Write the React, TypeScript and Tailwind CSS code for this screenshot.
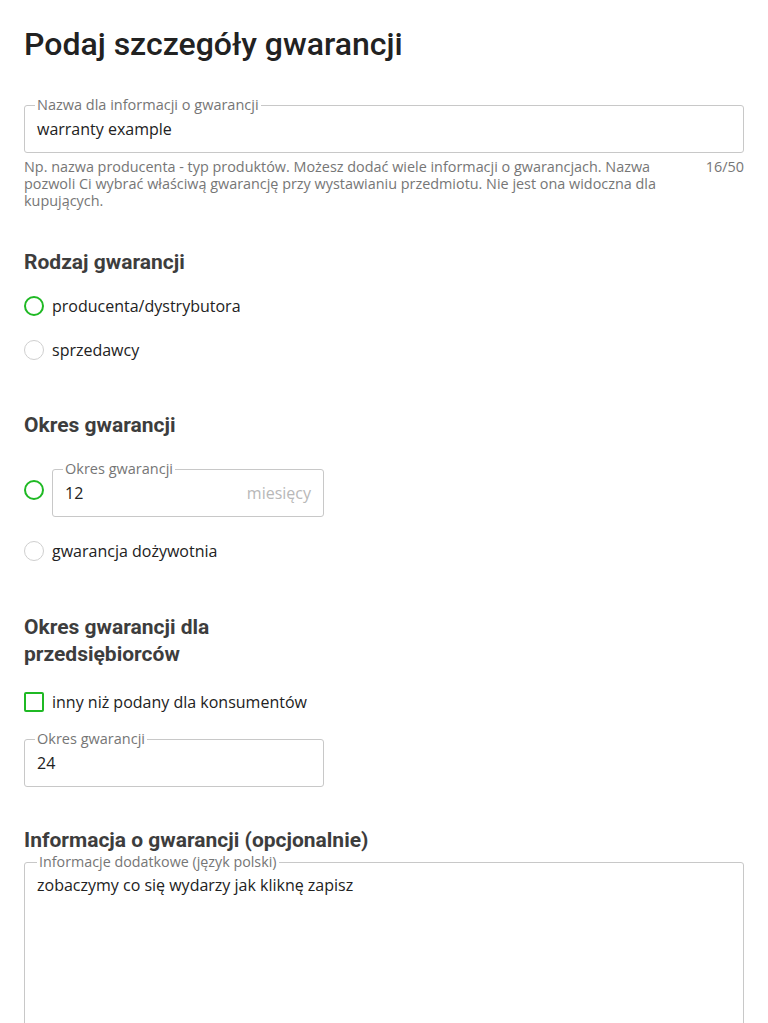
import React from "react";

const body = "font-['Open_Sans',sans-serif]";

function Field({
  label,
  value,
  suffix,
  className = "",
  tall = false,
}: {
  label: string;
  value: string;
  suffix?: string;
  className?: string;
  tall?: boolean;
}) {
  return (
    <fieldset className={`border border-[#c8c8c8] rounded-[3px] ${className}`}>
      <legend
        className={`${body} px-[2px] leading-[16px] text-[#767676] ${
          tall ? "ml-[12px] text-[14.3px]" : "ml-[10px] text-[14.5px]"
        }`}
      >
        {label}
      </legend>
      <div
        className={`flex items-start justify-between px-[12px] ${
          tall ? "pt-[3px] h-[200px]" : "pt-[4px] pb-[11px]"
        }`}
      >
        <span className={`${body} text-[16px] leading-[24px] text-[#222]`}>{value}</span>
        {suffix && (
          <span className={`${body} text-[16px] leading-[24px] text-[#b8b8b8]`}>{suffix}</span>
        )}
      </div>
    </fieldset>
  );
}

function Radio({ checked, className = "" }: { checked?: boolean; className?: string }) {
  return (
    <span
      className={`block w-[20px] h-[20px] shrink-0 rounded-full ${
        checked ? "border-2 border-[#1fb924]" : "border border-[#cfcfcf]"
      } ${className}`}
    />
  );
}

function Heading({ children, className = "" }: { children: React.ReactNode; className?: string }) {
  return (
    <h2
      className={`font-['Roboto',sans-serif] font-bold text-[21px] leading-[27px] text-[#3d3d3d] ${className}`}
    >
      {children}
    </h2>
  );
}

export default function App() {
  return (
    <div className="bg-white min-h-[1023px] px-6 pt-6 overflow-hidden">
      <h1 className="font-['Roboto',sans-serif] font-medium text-[32px] leading-[40px] text-[#222]">
        Podaj szczegóły gwarancji
      </h1>

      <Field className="mt-[33px]" label="Nazwa dla informacji o gwarancji" value="warranty example" />

      <div className="mt-[5px] flex items-start justify-between gap-[16px]">
        <p className={`${body} text-[14.4px] leading-[17px] text-[#767676]`}>
          Np. nazwa producenta - typ produktów. Możesz dodać wiele informacji o gwarancjach. Nazwa
          pozwoli Ci wybrać właściwą gwarancję przy wystawianiu przedmiotu. Nie jest ona widoczna dla
          kupujących.
        </p>
        <span className={`${body} text-[14.4px] leading-[17px] text-[#767676] shrink-0`}>16/50</span>
      </div>

      <Heading className="mt-[40px]">Rodzaj gwarancji</Heading>

      <div className="mt-[18px] flex flex-col gap-[20px]">
        <label className="flex items-center gap-[8px] h-[24px]">
          <Radio checked />
          <span className={`${body} text-[16px] leading-[24px] text-[#222]`}>producenta/dystrybutora</span>
        </label>
        <label className="flex items-center gap-[8px] h-[24px]">
          <Radio />
          <span className={`${body} text-[16px] leading-[24px] text-[#222]`}>sprzedawcy</span>
        </label>
      </div>

      <Heading className="mt-[50px]">Okres gwarancji</Heading>

      <div className="mt-[22px] flex items-center gap-[8px]">
        <Radio checked className="mt-[2px]" />
        <Field className="w-[272px]" label="Okres gwarancji" value="12" suffix="miesięcy" />
      </div>

      <label className="mt-[22px] flex items-center gap-[8px] h-[24px]">
        <Radio />
        <span className={`${body} text-[16px] leading-[24px] text-[#222]`}>gwarancja dożywotnia</span>
      </label>

      <Heading className="mt-[51px] w-[300px]">Okres gwarancji dla przedsiębiorców</Heading>

      <label className="mt-[22px] flex items-center gap-[8px] h-[24px]">
        <span className="block w-[20px] h-[20px] shrink-0 rounded-[2px] border-2 border-[#1fb924]" />
        <span className={`${body} text-[16px] leading-[24px] text-[#222]`}>
          inny niż podany dla konsumentów
        </span>
      </label>

      <Field className="mt-[17px] w-[300px]" label="Okres gwarancji" value="24" />

      <Heading className="mt-[40px]">Informacja o gwarancji (opcjonalnie)</Heading>

      <Field tall label="Informacje dodatkowe (język polski)" value="zobaczymy co się wydarzy jak kliknę zapisz" />
    </div>
  );
}
